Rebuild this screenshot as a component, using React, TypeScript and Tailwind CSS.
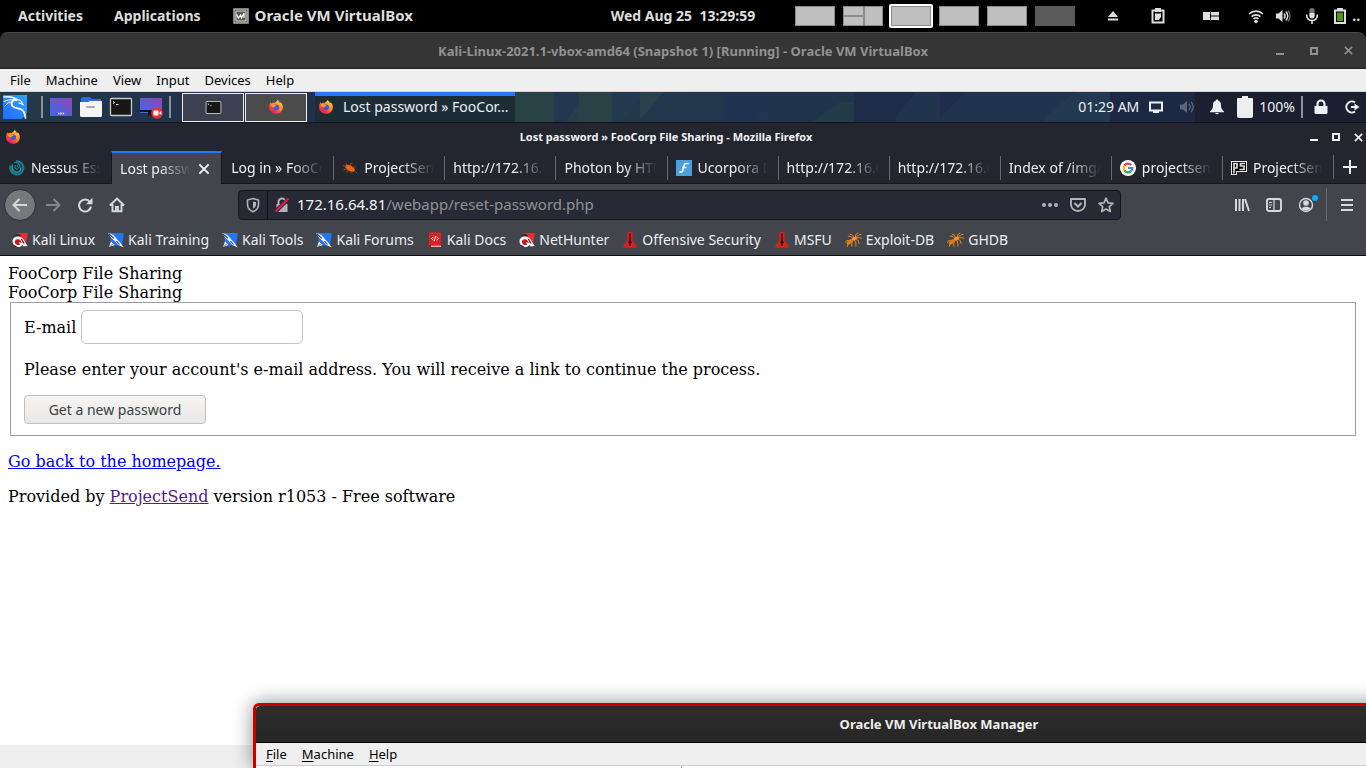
import type { ReactNode } from "react";

const NOTO = "font-['Noto_Sans',sans-serif]";

function Firefox({ className = "size-4" }: { className?: string }) {
  return (
    <svg viewBox="0 0 16 16" className={`shrink-0 ${className}`} aria-hidden="true">
      <defs>
        <linearGradient id="ffBody" x1="0.85" y1="0.05" x2="0.2" y2="0.95">
          <stop offset="0" stopColor="#ffd43a" />
          <stop offset="0.45" stopColor="#ff8a1e" />
          <stop offset="0.8" stopColor="#f5333f" />
          <stop offset="1" stopColor="#e31587" />
        </linearGradient>
      </defs>
      <path
        d="M9.500 1c1.400 1 2.300 2.100 2.500 3.300.3-.2.4-.6.4-1C14.300 4.600 15 6.600 14.800 8.700 14.500 12.500 11.500 14.800 8 14.800S1.200 12.400 1.100 8.500C1 6.200 1.600 4.300 2.800 2.900c0 .7.1 1.200.4 1.500C4.300 3.700 5.300 3.700 6.300 4.300 7 3.100 8.500 3 9.500 1Z"
        fill="url(#ffBody)"
      />
      <path d="M5.300 6.500c1.200-1 3.700-1.600 5.200.1 1.300 1.700.6 4.500-2.100 4.700-2.500.1-4-1.800-3.800-3.500.6.5 1.600.4 2.600-.1L5.300 6.500Z" fill="#4a50e8" />
      <path d="M3 5.100c1.200-.4 2.700-.1 3.500.8l2 .4c.1.700-1.200.9-1.600 1.500-.4.900-1.700.9-2.500.3C3.400 7.400 2.900 6.200 3 5.100Z" fill="#ff9a22" />
    </svg>
  );
}

function KaliLogo() {
  return (
    <svg viewBox="0 0 24 24" className="size-6 shrink-0" aria-label="Kali menu">
      <defs>
        <linearGradient id="kaliBg" x1="1" y1="0" x2="0" y2="1">
          <stop offset="0" stopColor="#2aa5ff" />
          <stop offset="1" stopColor="#2468ff" />
        </linearGradient>
      </defs>
      <path d="M0 0h24v18l-5 6H0z" fill="url(#kaliBg)" />
      <g fill="none" stroke="#fff" strokeLinecap="round">
        <path d="M1 2c4-.6 9-.5 13 2.800" strokeWidth="1.400" />
        <path d="M1 6.500c4-2 8-2.300 12-.8" strokeWidth="1" />
        <path d="M2 11c2-3 4.500-4.500 8-4" strokeWidth="1" />
        <path d="M14 4.500c-5 0-6.500 3.500-4.500 6.500 2 2.500 6 2 9 3.500 3 1.800 3.500 4.500 4 8.500" strokeWidth="1.800" />
        <path d="m14 4.500 3.500 1 2.500 4-4-1.500" strokeWidth="1.300" />
      </g>
    </svg>
  );
}

function DesktopIcon({ recording = false }: { recording?: boolean }) {
  return (
    <svg viewBox="0 0 24 24" className="size-6 shrink-0" aria-hidden="true">
      <defs>
        <linearGradient id="screen" x1="0" y1="1" x2="1" y2="0">
          <stop offset="0" stopColor="#3b6bea" />
          <stop offset="1" stopColor="#8d46b5" />
        </linearGradient>
      </defs>
      <rect x="1" y="3" width="22" height={recording ? 15 : 18} fill="url(#screen)" />
      {recording ? (
        <>
          <path d="M1 15h22v2H15v3.500H9V17H1z" fill="#111625" />
          <circle cx="18" cy="18" r="5.800" fill="#ee2f36" />
          <rect x="14.500" y="15.500" width="5" height="5" rx="1" fill="#fff" />
          <path d="m20 18 2.300-2v4z" fill="#fff" />
        </>
      ) : (
        <path d="M9 18.500h1.500M11.300 18.500h1.500M13.600 18.500h1.500" stroke="#fff" strokeWidth="1.500" />
      )}
    </svg>
  );
}

function FolderIcon() {
  return (
    <svg viewBox="0 0 24 24" className="size-6 shrink-0" aria-hidden="true">
      <path d="M3 2h8l2 2h9v8H2V3z" fill="#2e6cdf" />
      <path d="M1 7h8l2-1h12v14.500q0 1.500-1.500 1.500h-19Q1 22 1 20.500z" fill="#f5f5f5" />
      <rect x="7" y="11" width="9" height="2" rx="1" fill="#aaa" />
    </svg>
  );
}

function TerminalIcon({ className = "size-6" }: { className?: string }) {
  return (
    <svg viewBox="0 0 24 24" className={`shrink-0 ${className}`} aria-hidden="true">
      <rect x="1.500" y="3.500" width="21" height="17" rx="1" fill="#171717" stroke="#c9c9c9" strokeWidth="1.300" />
      <path d="m4 6.500 1.500 1L4 8.500M7 9.500h2.500" stroke="#ddd" strokeWidth="1" fill="none" />
    </svg>
  );
}

function KaliBookmark({ red = false }: { red?: boolean }) {
  return red ? (
    <svg viewBox="0 0 16 16" className="size-4 shrink-0" aria-hidden="true">
      <path d="M4 1h11.800L14 12 9 7z" fill="#ee2b30" />
      <path d="M1.500 3.500 6 1.500 10 4 6 4.500z" fill="#2b2b2e" />
      <path d="M.5 9.500C.5 6 4 4 7.500 4.800c3 .7 4.500 3 5.500 5.200l2.700 4-4.200.5-1-1.500-2.500 2C4.500 15.500.8 13.500.5 9.500Z" fill="#f4f4f4" />
      <path d="M3 9c.8-1.800 3-2.300 4.700-1.300L10.500 11 7 10.200l1 2.500C5.500 13.700 2.200 12 3 9Z" fill="#c4161d" />
      <path d="m9.500 7 2.500 4.500M2 13.500l2.500 1.500" stroke="#2b2b2e" strokeWidth="1.200" />
    </svg>
  ) : (
    <svg viewBox="0 0 16 16" className="size-4 shrink-0" aria-hidden="true">
      <path d="M2 1h13.800L14 13.500H3z" fill="#2377f5" />
      <path d="M0 1.200c3 .2 5 1.300 6.500 3l3.700 4.300 2.300 2.500 3.300 4.500-5.300-2.500-3.300-3.700L3.500 6z" fill="#f5f7fa" />
      <path d="m1 2 5 4.300M8.500 9l3 3.500" stroke="#3a3a3a" strokeWidth="1.100" />
      <path d="M3 9.500 6.500 13 1 15z" fill="#fff" />
      <path d="m2 14.500 3-3" stroke="#555" strokeWidth="1" />
    </svg>
  );
}

function DocsIcon() {
  return (
    <svg viewBox="0 0 16 16" className="size-4 shrink-0" aria-hidden="true">
      <path d="M2 .5h12V13H2z" fill="#e01e24" />
      <path d="M2 13h12v2.500H3q-1 0-1-1z" fill="#b9151a" />
      <path d="M4 13.700h10v1H4z" fill="#eee" />
      <path d="M6.300 4.800 4.600 6.600l1.700 1.800M9.700 4.800l1.700 1.800-1.700 1.800M8.600 4l-1.200 5.200" stroke="#fff" strokeWidth="1" fill="none" />
    </svg>
  );
}

function OffsecIcon() {
  return (
    <svg viewBox="0 0 16 16" className="size-4 shrink-0" aria-hidden="true">
      <path d="M5.500 0h5l.3 8.500 3.700 5V16H1.500v-2.500l3.700-5z" fill="#d42020" />
      <path d="M7.400 1.500h1.200v7l1.400 2-1.400 1V14H7.400v-2.500l-1.400-1 1.400-2z" fill="#1c0e0e" />
    </svg>
  );
}

function BugIcon() {
  return (
    <svg viewBox="0 0 18 16" className="h-4 w-[17px] shrink-0" aria-hidden="true">
      <g stroke="#ee8a1b" fill="none" strokeWidth="1">
        <path d="M5 9 2 8.500 0 11M5 11l-2 1.500L2.500 15M8 9.500 7 12l.5 3M10 8l1.500 3v4M11 7l3 1.500 1 3.500M12 6l3-.5 3 .5M11 5l.5-3L14 .5M8 6 6 4 3 4M12 5l2.500-2.500 3-.5M9 5.500 8 3 5 1.500" />
      </g>
      <ellipse cx="4.800" cy="10.200" rx="3.600" ry="2" transform="rotate(-40 4.800 10.200)" fill="#e17c12" />
      <ellipse cx="9.800" cy="6.500" rx="3" ry="1.700" transform="rotate(-28 9.800 6.500)" fill="#f49a2b" />
    </svg>
  );
}

function NessusIcon() {
  return (
    <svg viewBox="0 0 16 16" className="size-4 shrink-0" fill="none" aria-hidden="true">
      <path d="M7 1.500A6.500 6.500 0 1 1 1.800 5.500" stroke="#147f8c" strokeWidth="2.200" />
      <path d="M3.800 4.500A5 5 0 0 0 8 12.300 4.200 4.200 0 0 0 12 7.500" stroke="#1d97a3" strokeWidth="1.500" />
      <path d="M6.500 5c-1.200 2 0 4.200 2.300 4.200M5 2.500C8 2 11 4 11 7l-2 1M8 5l1 2" stroke="#147f8c" strokeWidth="1.300" />
    </svg>
  );
}

function RoachIcon() {
  return (
    <svg viewBox="0 0 16 16" className="size-4 shrink-0" aria-hidden="true">
      <ellipse cx="8" cy="8.200" rx="5.300" ry="2.900" transform="rotate(28 8 8.200)" fill="#ee6412" />
      <path d="M4 6.500 1 5.500M5 5.500 3.500 3M8 6l.5-2.500 2-.5M10.500 7.500l3-.5M5 8.500 1.500 10M7 10l-3 2.500M9.500 11l-.5 2.500M12 10.500l3 2.500" stroke="#a84a14" strokeWidth="0.900" fill="none" />
    </svg>
  );
}

function UcorporaIcon() {
  return (
    <svg viewBox="0 0 16 16" className="size-4 shrink-0" aria-hidden="true">
      <path d="M0 0h16v16H0z" fill="#4a9fdc" />
      <path d="M12.500 3.800C9 3 8.300 4 7.800 6.500L7 10c-.4 1.700-1.500 2.500-3.500 2M6 7.500h4.500" stroke="#fff" strokeWidth="1.600" fill="none" />
    </svg>
  );
}

function GoogleIcon() {
  return (
    <svg viewBox="0 0 16 16" className="size-4 shrink-0" fill="none" aria-hidden="true">
      <circle cx="8" cy="8" r="8" fill="#fff" />
      <g strokeWidth="2.200">
        <path d="M11.200 4.900A4.400 4.400 0 0 0 4.200 5.800" stroke="#ea4335" />
        <path d="M4.200 5.800a4.400 4.400 0 0 0 0 4.400" stroke="#fbbc05" />
        <path d="M4.200 10.200a4.400 4.400 0 0 0 6.600 1.200" stroke="#34a853" />
        <path d="M10.800 11.400A4.400 4.400 0 0 0 12.400 8H8" stroke="#4285f4" />
      </g>
    </svg>
  );
}

function PsIcon() {
  return (
    <svg viewBox="0 0 16 16" className="size-4 shrink-0" fill="none" aria-hidden="true">
      <path d="M0 1h16v11H6v3H0z" fill="#e8e8e8" />
      <path d="M1 2h14v9H5v3H1z" fill="#000" />
      <path d="M3 13.500V3.500h3V8H3M14 3.500H9.500V6H13v3.500H8.500" stroke="#dcdcdc" strokeWidth="1.700" />
    </svg>
  );
}

function Close({ className = "size-3" }: { className?: string }) {
  return (
    <svg viewBox="0 0 12 12" className={className} fill="none" stroke="currentColor" strokeWidth="1.700" aria-hidden="true">
      <path d="m2 2 8 8M10 2l-8 8" />
    </svg>
  );
}

function WindowButtons({ className }: { className: string }) {
  return (
    <div className={`flex items-center ${className}`}>
      <button aria-label="Minimize" className="flex">
        <svg viewBox="0 0 10 10" className="size-[10px]"><path d="M1 7h8v2H1z" fill="currentColor" /></svg>
      </button>
      <button aria-label="Maximize" className="flex">
        <svg viewBox="0 0 10 10" className="size-[10px]"><path d="M2 2h6v6H2z" fill="none" stroke="currentColor" strokeWidth="2" /></svg>
      </button>
      <button aria-label="Close" className="flex"><Close className="size-[11px]" /></button>
    </div>
  );
}

function Glyph({ children, className = "size-4" }: { children: ReactNode; className?: string }) {
  return (
    <svg viewBox="0 0 16 16" className={`shrink-0 ${className}`} fill="none" stroke="currentColor" aria-hidden="true">
      {children}
    </svg>
  );
}

function TopBar() {
  const space = "h-5 w-10 border border-[#8a8a8a] bg-[#bfbfbf]";
  return (
    <header className="grid h-8 shrink-0 grid-cols-[1fr_auto_1fr] items-center bg-black text-sm font-bold text-[#dedede]">
      <div className="flex items-center pl-[18px]">
        <button>Activities</button>
        <button className="ml-[31px]">Applications</button>
        <button className="ml-[32px] flex items-center gap-1.5 text-[15px]">
          <Glyph>
            <path d="M1 1h14v14H1z" fill="#555" stroke="#aaa" strokeWidth="1.500" />
            <path d="M3 3h10v10H3z" stroke="#ddd" />
            <path d="M3.500 6.500 5.500 10l2-3 1 3 2.500-5v5" stroke="#fff" strokeWidth="1.200" />
          </Glyph>
          Oracle VM VirtualBox
        </button>
      </div>
      <time className="whitespace-pre">Wed Aug 25  13:29:59</time>
      <div className="flex items-center pl-10">
        <div className="flex items-center gap-2">
          <span className={space} />
          <span className={`${space} grid grid-cols-2`}>
            <span className="mt-[8px] border-t-2 border-[#8a8a8a]" />
            <span className="border-l-2 border-[#8a8a8a]" />
          </span>
          <span className="-mx-0.5 rounded-xs border-2 border-white bg-[#bfbfbf]">
            <span className="block h-5 w-10 border border-[#8a8a8a]" />
          </span>
          <span className={space} />
          <span className={space} />
          <span className="h-5 w-10 bg-[#5a5a5a]" />
        </div>
        <Glyph className="ml-[30px] size-4">
          <path d="m8 3 5 6H3zM3 10.500h10v2H3z" fill="currentColor" stroke="none" />
        </Glyph>
        <Glyph className="ml-[29px] size-4">
          <path d="M5 2.500H2.500v12h11v-12H11" strokeWidth="2" />
          <path d="M5 0h6v4H5zM5 5.500h6V9L9 12H5z" fill="currentColor" stroke="none" />
        </Glyph>
        <Glyph className="ml-[37px] size-4">
          <path d="M0 4h7v8H0zM8 4h8v3.500H8zM8 8.500h8V12H8z" fill="currentColor" stroke="none" />
        </Glyph>
        <Glyph className="ml-[29px] size-4">
          <path d="M1 6a10 10 0 0 1 14 0M3.500 8.700a6.500 6.500 0 0 1 9 0M5.700 11a3.300 3.300 0 0 1 4.600 0" strokeWidth="1.600" />
          <circle cx="8" cy="13.500" r="1.800" fill="currentColor" stroke="none" />
        </Glyph>
        <Glyph className="ml-[11px] size-4">
          <path d="M1 5.500h2.500L7.500 2v12l-4-3.500H1z" fill="currentColor" stroke="none" />
          <path d="M9 5.500q2 2.500 0 5M11 3.500q3.500 4.500 0 9" strokeWidth="1.500" />
          <path d="M13 2.500q4 5.500 0 11" stroke="#666" strokeWidth="1.300" />
        </Glyph>
        <Glyph className="ml-[13px] size-4">
          <rect x="5.500" y="0" width="5" height="10" rx="2.500" fill="#777" stroke="none" />
          <path d="M5.500 5h5v3a2.500 2.500 0 0 1-5 0z" fill="currentColor" stroke="none" />
          <path d="M2.700 6.500v1.300a5.300 4.700 0 0 0 10.600 0V6.500M8 12.500V16" strokeWidth="1.600" />
        </Glyph>
        <Glyph className="ml-[12px] size-4">
          <path d="M3 2.500h10v12.500H3z" strokeWidth="2" />
          <path d="M5 0h6v3H5z" fill="currentColor" stroke="none" />
          <path d="M5 4.500h6v8.500H5z" fill="#4e9a06" stroke="none" />
        </Glyph>
        <span className="ml-1">..</span>
      </div>
    </header>
  );
}

function MenuBar() {
  return (
    <nav className="flex h-[23px] shrink-0 items-center gap-[15px] border-b border-[#d4d4d4] bg-[#efefef] pt-0.5 pl-[10px] text-[13px] text-black">
      {["File", "Machine", "View", "Input", "Devices", "Help"].map((m) => (
        <button key={m}>{m}</button>
      ))}
    </nav>
  );
}

function Wallpaper() {
  return (
    <svg viewBox="0 0 1366 30" preserveAspectRatio="none" className="absolute inset-0 size-full" aria-hidden="true">
      <defs>
        <linearGradient id="wall">
          <stop offset="0" stopColor="#223a45" />
          <stop offset="0.1" stopColor="#22344b" />
          <stop offset="0.2" stopColor="#21304b" />
          <stop offset="0.4" stopColor="#243a4b" />
          <stop offset="0.6" stopColor="#20344c" />
          <stop offset="0.8" stopColor="#20344d" />
          <stop offset="0.81" stopColor="#1d2841" />
          <stop offset="1" stopColor="#1b1d2a" />
        </linearGradient>
      </defs>
      <path d="M0 0h1366v30H0z" fill="url(#wall)" />
      <path d="M486 0h29v30h-29zM547 0h30v30h-50zM580 0h32v30h-32z" fill="#294245" />
      <path d="M515 0h39l-22 30h-17z" fill="#294245" />
      <path d="M554 0h36l-22 30h-14z" fill="#23384e" />
      <path d="M586 0h26v30h-46z" fill="#273f49" />
      <path d="M618 0h-20v30l20-30z" fill="#263d4a" />
      <path d="M579 0h33v30h-33z" fill="#2a4246" />
      <path d="M612 0h32l-22 30h-10z" fill="#233a50" />
      <path d="M640 0h24l-24 28z" fill="#29414a" />
      <path d="M725 0h55l-14 8-16 22h-25z" fill="#203350" />
      <path d="M812 30l28-20h14v20z" fill="#243b48" />
      <path d="M854 0h42v30h-42z" fill="#1e2c49" />
      <path d="M896 0h20l-20 24zM940 0h26l-26 26z" fill="#1e2e4a" />
      <path d="M1045 25l30-25h35v30h-65z" fill="#22394f" />
      <path d="M1110 0h85v30h-85z" fill="#1d2842" />
      <path d="M1195 0h171v30h-171z" fill="#1c1f2f" />
    </svg>
  );
}

function KaliPanel() {
  const sep = <span className="h-[22px] w-0.5 bg-[#8b929c]" />;
  return (
    <div className="relative h-[31px] shrink-0 border-b border-[#12131c] text-sm text-[#eceff4]">
      <Wallpaper />
      <div className="relative flex h-full items-center">
        <div className="flex items-center pl-[3px]"><KaliLogo /></div>
        <div className="ml-[14px] flex items-center">
          {sep}
          <div className="mx-[6px] flex gap-1.5">
            <DesktopIcon />
            <FolderIcon />
            <TerminalIcon />
            <DesktopIcon recording />
          </div>
          {sep}
        </div>
        <div className="ml-[11px] flex gap-px">
          <button aria-label="Workspace 1" className="flex h-[29px] w-[62px] items-center justify-center border border-[#eee] bg-[#3c4152]">
            <TerminalIcon className="size-[17px]" />
          </button>
          <button aria-label="Workspace 2" className="flex h-[29px] w-[62px] items-center justify-center border border-[#eee] bg-[#4c4b4b]">
            <Firefox />
          </button>
        </div>
        <button className="ml-2 flex h-full w-[200px] items-center gap-[9px] border-t-4 border-[#2777ff] bg-[#1d2d36] pl-[3px] pb-1">
          <Firefox />
          <span className="whitespace-nowrap">Lost password » FooCor...</span>
        </button>
        <div className="ml-auto flex items-center pr-[6px]">
          <time>01:29 AM</time>
          <Glyph className="ml-[9px] size-4">
            <path d="M2 3.500h12v8H2z" strokeWidth="2" />
            <path d="M5 12h6v2H5z" fill="currentColor" stroke="none" />
          </Glyph>
          <Glyph className="ml-[15px] size-4 text-[#606778]">
            <path d="M1 5.500h3L8 2v12l-4-3.500H1z" fill="currentColor" stroke="none" />
            <path d="M10 5q2.500 3 0 6M12 3q4.500 5 0 10" strokeWidth="1.200" />
          </Glyph>
          <Glyph className="ml-[14px] size-4">
            <path d="M8 .5c1 0 1.300.7 1.300 1.300C11.500 2.500 12 4.300 12 6c0 3 .6 4.200 3 6.500v.8H1v-.8C3.400 10.200 4 9 4 6c0-1.700.5-3.500 2.700-4.200C6.700 1.200 7 .5 8 .5ZM6 14h4q-2 2.500-4 0Z" fill="currentColor" stroke="none" />
          </Glyph>
          <svg viewBox="0 0 16 22" className="ml-[12px] h-[22px] w-4" aria-hidden="true">
            <path d="M5 0h6v2h4q1 0 1 1v17q0 2-2 2H2q-2 0-2-2V3q0-1 1-1h4z" fill="#eee" />
          </svg>
          <span className="mx-[6px]">100%</span>
          {sep}
          <Glyph className="ml-[10px] size-4">
            <path d="M1.500 7h13v6.500q0 1.500-1.500 1.500H3q-1.500 0-1.500-1.500z" fill="currentColor" stroke="none" />
            <path d="M4.500 7.500V5a3.500 3.500 0 0 1 7 0v2.500" strokeWidth="2.200" />
          </Glyph>
          <Glyph className="ml-[15px] size-4">
            <path d="M11 3.500a5.500 5.500 0 1 0 0 9M7 8h4" strokeWidth="2" />
            <path d="m10.500 4.500 5 3.500-5 3.500z" fill="currentColor" stroke="none" />
          </Glyph>
        </div>
      </div>
    </div>
  );
}

const tabs: { title: string; icon?: ReactNode; active?: boolean; sep?: boolean }[] = [
  { title: "Nessus Ess", icon: <NessusIcon /> },
  { title: "Lost passw", active: true },
  { title: "Log in » FooCo" },
  { title: "ProjectSen", icon: <RoachIcon />, sep: true },
  { title: "http://172.16.6", sep: true },
  { title: "Photon by HTM", sep: true },
  { title: "Ucorpora D", icon: <UcorporaIcon />, sep: true },
  { title: "http://172.16.6", sep: true },
  { title: "http://172.16.6", sep: true },
  { title: "Index of /img/", sep: true },
  { title: "projectsen", icon: <GoogleIcon />, sep: true },
  { title: "ProjectSen", icon: <PsIcon />, sep: true },
];

function Tabs() {
  return (
    <div className="flex h-[33px] shrink-0 text-sm text-[#eef0f3]">
      <div role="tablist" className="grid min-w-0 flex-1 grid-cols-12">
        {tabs.map((t, i) => (
          <div
            key={i}
            role="tab"
            aria-selected={!!t.active}
            className={
              t.active
                ? "flex min-w-0 items-center border-x border-t-2 border-x-[#15161c] border-t-[#2777ff] bg-[#43454c] pr-[10px] pl-2"
                : "flex min-w-0 items-center border-b border-[#15161c] pt-0.5 pr-[10px]"
            }
          >
            {!t.active && <span className={t.sep ? "h-6 w-px shrink-0 bg-[#66686e]" : "w-px shrink-0"} />}
            <div className={`flex min-w-0 flex-1 items-center gap-[6px] ${t.active ? "" : "pl-2"}`}>
              {t.icon}
              <span className="min-w-0 flex-1 overflow-hidden whitespace-nowrap [mask-image:linear-gradient(to_left,transparent,black_32px)]">
                {t.title}
              </span>
              {t.active && (
                <button aria-label="Close tab"><Close className="size-[14px]" /></button>
              )}
            </div>
          </div>
        ))}
      </div>
      <div className="flex w-[33px] items-center border-b border-[#15161c]">
        <span className="h-6 w-px bg-[#66686e]" />
        <button aria-label="New tab" className="flex flex-1 justify-center">
          <svg viewBox="0 0 14 14" className="size-[14px]" stroke="currentColor" strokeWidth="2"><path d="M7 0v14M0 7h14" /></svg>
        </button>
      </div>
    </div>
  );
}

function Toolbar() {
  return (
    <div className="flex h-[41px] shrink-0 items-center bg-[#43454c] text-[#d8d8da]">
      <div className="flex items-center pl-1">
        <button aria-label="Back" className="flex size-8 items-center justify-center rounded-full border border-[#2c2d33] bg-[#77787c]">
          <Glyph><path d="M15 8H1.500M7.500 2l-6 6 6 6" strokeWidth="2" /></Glyph>
        </button>
        <button aria-label="Forward" className="ml-[9px] text-[#85868a]">
          <Glyph><path d="M1 8h13.500M8.500 2l6 6-6 6" strokeWidth="2" /></Glyph>
        </button>
        <button aria-label="Reload" className="ml-4">
          <Glyph><path d="M13 5A6 6 0 1 0 14 9.500" strokeWidth="2" /><path d="M15.500.8v6.400H9z" fill="currentColor" stroke="none" /></Glyph>
        </button>
        <button aria-label="Home" className="ml-4">
          <Glyph><path d="m.8 8.500 7.200-7 7.200 7M3.500 7v7.200h9V7M7 14v-4h2v4" strokeWidth="1.900" /></Glyph>
        </button>
      </div>
      <div className="mx-[113px] flex h-[30px] flex-1 items-center rounded border border-[#14151b] bg-[#272934] text-[15px]">
        <Glyph className="ml-1.5 size-4 text-[#b1b1b6]">
          <path d="M8 1.500 13.500 3v4.500c0 3.500-2.500 6-5.500 7.200-3-1.200-5.500-3.700-5.500-7.200V3z" strokeWidth="1.600" />
          <path d="M8 4.500v7.300c2-1 3-2.500 3-4.500V5z" fill="currentColor" stroke="none" />
        </Glyph>
        <span className="ml-1.5 h-full w-px bg-[#111218]" />
        <Glyph className="ml-[6px] size-4 text-[#b1b1b6]">
          <path d="M2.500 7h11v8h-11z" fill="currentColor" stroke="none" />
          <path d="M4.500 7V5a3.500 3.500 0 0 1 7 0v2" strokeWidth="2" />
          <path d="M1.500 14.500 15 1.500" stroke="#272934" strokeWidth="4" />
          <path d="M1.500 14.500 14.500 1.500" stroke="#f5164a" strokeWidth="1.800" />
        </Glyph>
        <div role="textbox" aria-label="Address" className="ml-[7px] flex-1 text-[#8f9196]">
          <span className="text-[#f4f4f6]">172.16.64.81</span>/webapp/reset-password.php
        </div>
        <div className="flex items-center gap-3 pr-1.5 text-[#b4b4b8]">
          <Glyph><g fill="currentColor" stroke="none"><circle cx="2" cy="8" r="2" /><circle cx="8" cy="8" r="2" /><circle cx="14" cy="8" r="2" /></g></Glyph>
          <Glyph><path d="M1 2h14v5.500a7 6.500 0 0 1-14 0z" strokeWidth="1.900" strokeLinejoin="round" /><path d="m4.500 6 3.500 3.500L11.500 6" strokeWidth="2" /></Glyph>
          <Glyph><path d="m8 1.200 2 4.600 5 .5-3.700 3.300 1 4.900L8 12l-4.300 2.500 1-4.900L1 6.300l5-.5z" strokeWidth="1.700" strokeLinejoin="round" /></Glyph>
        </div>
      </div>
      <div className="flex items-center gap-4 pr-[11px]">
        <Glyph><path d="M2 2v12M5.500 2v12M9 2v12M11 2l4 12" strokeWidth="2" /></Glyph>
        <Glyph><rect x="1" y="2" width="14" height="12" rx="2" strokeWidth="1.900" /><path d="M8 2v12M3 5.500h3M3 8h3M3 10.500h2" strokeWidth="1.200" /></Glyph>
        <span className="relative flex">
          <Glyph><circle cx="8" cy="8" r="6.500" strokeWidth="1.400" /><circle cx="8" cy="6" r="2.800" fill="currentColor" stroke="none" /><path d="M3.500 11.500C5 9 11 9 12.500 11.500 10.500 14 5.500 14 3.500 11.500Z" fill="currentColor" stroke="none" /></Glyph>
          <span className="absolute -top-0.5 -right-1 size-[6px] rounded-full bg-[#00b3ff]" />
        </span>
        <span className="-mx-1 h-[33px] w-px bg-[#6a6b71]" />
        <Glyph><path d="M2 3h12M2 8h12M2 13h12" strokeWidth="2" /></Glyph>
      </div>
    </div>
  );
}

const bookmarks: [string, ReactNode][] = [
  ["Kali Linux", <KaliBookmark red />],
  ["Kali Training", <KaliBookmark />],
  ["Kali Tools", <KaliBookmark />],
  ["Kali Forums", <KaliBookmark />],
  ["Kali Docs", <DocsIcon />],
  ["NetHunter", <KaliBookmark red />],
  ["Offensive Security", <OffsecIcon />],
  ["MSFU", <OffsecIcon />],
  ["Exploit-DB", <BugIcon />],
  ["GHDB", <BugIcon />],
];

function Bookmarks() {
  return (
    <nav className="flex h-[31px] shrink-0 items-center gap-[13px] border-b border-[#0c0c0d] bg-[#43454c] pl-3 text-sm whitespace-nowrap text-[#eceef1]">
      {bookmarks.map(([name, icon]) => (
        <a key={name} href="#" className="flex items-center gap-1">
          {icon}
          {name}
        </a>
      ))}
    </nav>
  );
}

function Page() {
  return (
    <main className="flex-1 bg-white p-2 font-['DejaVu_Serif',serif] text-base leading-[19px] text-black">
      <div>FooCorp File Sharing</div>
      <div>FooCorp File Sharing</div>
      <form onSubmit={(e) => e.preventDefault()}>
        <fieldset className="mx-0.5 border border-[#9c9c9c] px-[13px] pt-[7px] pb-[11px]">
          <div className="flex items-center gap-[5px]">
            <label htmlFor="email">E-mail</label>
            <input id="email" type="email" className="h-[34px] w-[222px] rounded-[5px] border border-[#c8c3bf] px-2 outline-none" />
          </div>
          <p className="my-4">Please enter your account's e-mail address. You will receive a link to continue the process.</p>
          <button className="block h-[29px] w-[182px] rounded border border-[#c3beb9] bg-linear-to-b from-[#f6f5f4] to-[#e9e7e5] font-['Noto_Sans',sans-serif] text-sm text-[#3b4044]">
            Get a new password
          </button>
        </fieldset>
      </form>
      <p className="my-4"><a href="#" className="text-[#0000ee] underline">Go back to the homepage.</a></p>
      <p>Provided by <a href="#" className="text-[#551a8b] underline">ProjectSend</a> version r1053 - Free software</p>
    </main>
  );
}

function ManagerWindow() {
  return (
    <section className="absolute bottom-0 left-[253px] flex h-[65px] w-[calc(100%+6px)] flex-col rounded-t-md border-3 border-b-0 border-[#c80000] bg-white shadow-[0_0_20px_rgba(0,0,0,0.45)]">
      <h2 className="flex h-[37px] shrink-0 items-center justify-center rounded-t-sm border-b border-black bg-linear-to-b from-[#2d2d2d] to-[#262626] pt-0.5 text-[13px] font-bold text-[#eeeeec]">
        Oracle VM VirtualBox Manager
      </h2>
      <nav className="flex h-[23px] shrink-0 items-center gap-[15px] border-b border-[#cfcfcf] bg-[#efefef] pt-0.5 pl-[10px] text-[13px] text-black">
        {["File", "Machine", "Help"].map((m) => (
          <button key={m}><span className="underline underline-offset-2">{m[0]}</span>{m.slice(1)}</button>
        ))}
      </nav>
      <div className="w-[426px] flex-1 border-r border-[#b5b5b5]" />
    </section>
  );
}

export default function App() {
  return (
    <div className={`relative flex h-screen flex-col overflow-hidden bg-black ${NOTO}`}>
      <TopBar />
      <div className="relative flex h-[37px] shrink-0 items-center justify-center rounded-t-lg border-t border-b border-t-[#4a4a4a] border-b-[#222] bg-[#353535] text-[13px] font-bold text-[#919191]">
        <span className="pt-0.5">Kali-Linux-2021.1-vbox-amd64 (Snapshot 1) [Running] - Oracle VM VirtualBox</span>
        <WindowButtons className="absolute right-[12px] gap-6" />
      </div>
      <MenuBar />
      <KaliPanel />
      <div className="flex min-h-0 flex-1 flex-col bg-[#23252f]">
        <div className="relative flex h-7 shrink-0 items-center justify-center pr-[34px] text-[11px] font-bold text-[#f2f3f5]">
          <Firefox className="absolute left-[5px] size-4" />
          <span>Lost password » FooCorp File Sharing - Mozilla Firefox</span>
          <WindowButtons className="absolute right-[2px] gap-3" />
        </div>
        <Tabs />
        <Toolbar />
        <Bookmarks />
        <Page />
        <div className="h-[23px] shrink-0 bg-[#efefef]" />
      </div>
      <ManagerWindow />
    </div>
  );
}
